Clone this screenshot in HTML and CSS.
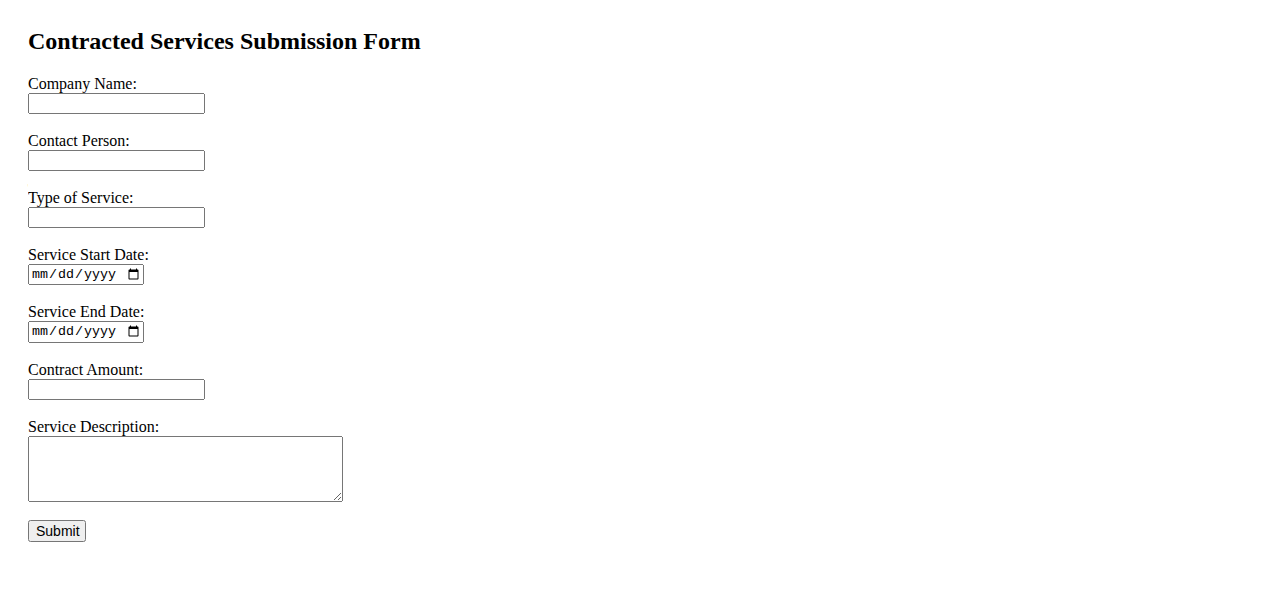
FILE: index.html
```html
<!DOCTYPE html>
<html>
<head>
<meta charset="utf-8">
<title>Contracted Services Submission Form</title>
<link rel="stylesheet" href="styles.css">
</head>
<body>
<h2 class="title">Contracted Services Submission Form</h2>
<form class="form">
  <label for="company">Company Name:</label><br>
  <input type="text" id="company" class="field"><br><br>
  <label for="contact">Contact Person:</label><br>
  <input type="text" id="contact" class="field"><br><br>
  <label for="service">Type of Service:</label><br>
  <input type="text" id="service" class="field"><br><br>
  <label for="start">Service Start Date:</label><br>
  <input type="date" id="start" class="date"><br><br>
  <label for="end">Service End Date:</label><br>
  <input type="date" id="end" class="date"><br><br>
  <label for="amount">Contract Amount:</label><br>
  <input type="text" id="amount" class="field"><br><br>
  <label for="desc">Service Description:</label><br>
  <textarea id="desc" class="area" rows="4" cols="40"></textarea><br><br>
  <input type="submit" value="Submit" class="submit">
</form>
</body>
</html>
```
FILE: styles.css
```css
body {
  margin: 8px;
  padding: 0 20px;
  font-family: "Liberation Serif", "Times New Roman", serif;
  font-size: 16px;
  color: #000;
  background: #fff;
}
.title {
  font-size: 24px;
  font-weight: bold;
  margin: 20px 0 20px;
}
.field {
  box-sizing: border-box;
  width: 177px;
  font-family: "Liberation Sans", Arial, sans-serif;
}
.date {
  box-sizing: border-box;
  width: 116px;
  font-family: "Liberation Mono", monospace;
}
.area {
  box-sizing: border-box;
  width: 315px;
  height: 66px;
  vertical-align: bottom;
  font-family: "Liberation Mono", monospace;
}
.submit {
  box-sizing: border-box;
  width: 58px;
  font-family: "Liberation Sans", Arial, sans-serif;
  font-size: 14px;
}
```
